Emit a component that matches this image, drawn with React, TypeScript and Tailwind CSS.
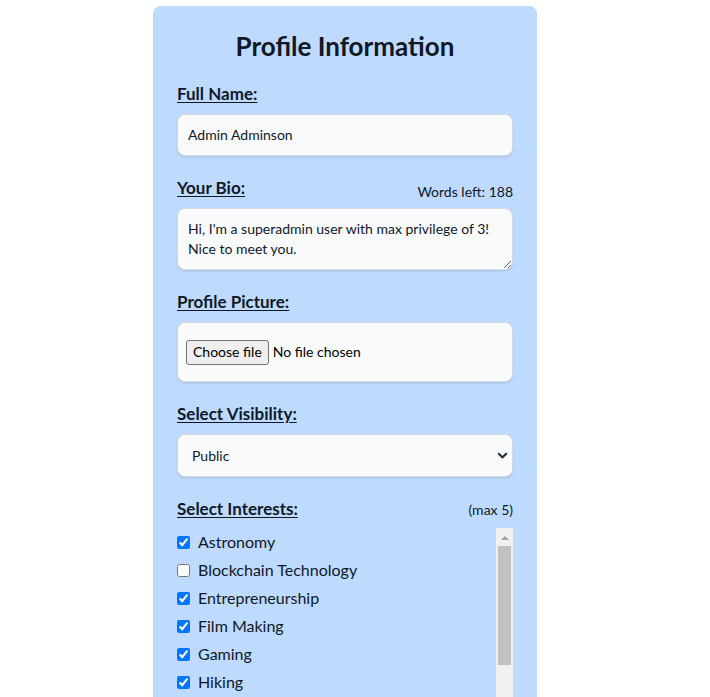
import React from "react";

const interests = [
  { id: "astronomy", label: "Astronomy", checked: true },
  { id: "blockchain", label: "Blockchain Technology", checked: false },
  { id: "entrepreneurship", label: "Entrepreneurship", checked: true },
  { id: "film", label: "Film Making", checked: true },
  { id: "gaming", label: "Gaming", checked: true },
  { id: "hiking", label: "Hiking", checked: true },
  { id: "music", label: "Music", checked: false },
  { id: "photography", label: "Photography", checked: false },
  { id: "reading", label: "Reading", checked: false },
];

const font = { fontFamily: '"Segoe UI", Lato, "Noto Sans", sans-serif' };

function Label({ children }: { children: React.ReactNode }) {
  return (
    <label className="text-[17px] leading-6 font-bold text-gray-900 underline underline-offset-2">
      {children}
    </label>
  );
}

export default function App() {
  return (
    <div className="min-h-screen bg-white" style={font}>
      <div className="flex w-[690px] justify-center pt-[6px]">
        <div className="w-96 rounded-lg bg-blue-200 p-6">
          <h2 className="mb-5 text-center text-[26px] leading-8 font-bold text-gray-900">
            Profile Information
          </h2>

          <form className="space-y-5">
            <div className="flex flex-col">
              <Label>Full Name:</Label>
              <input
                type="text"
                defaultValue="Admin Adminson"
                className="mt-2 rounded-lg border border-[#d6dbe1] bg-gray-50 p-2.5 text-sm leading-5 text-gray-900 shadow-sm outline-none"
              />
            </div>

            <div className="flex flex-col">
              <div className="flex items-end justify-between">
                <Label>Your Bio:</Label>
                <span className="translate-y-[2px] text-sm leading-5 text-gray-900">
                  Words left: 188
                </span>
              </div>
              <textarea
                rows={2}
                defaultValue="Hi, I'm a superadmin user with max privilege of 3! Nice to meet you."
                className="mt-2 rounded-lg border border-[#d6dbe1] bg-gray-50 p-2.5 text-sm leading-5 text-gray-900 shadow-sm outline-none"
              />
            </div>

            <div className="flex flex-col">
              <Label>Profile Picture:</Label>
              <div className="mt-2 flex h-[60px] items-center gap-1 rounded-lg border border-[#d6dbe1] bg-gray-50 px-2 text-sm text-gray-900 shadow-sm">
                <span className="flex h-[25px] items-center rounded-[3px] border border-[#767676] bg-[#efefef] px-[6px] text-black">
                  Choose file
                </span>
                <span className="text-black">No file chosen</span>
              </div>
            </div>

            <div className="flex flex-col">
              <Label>Select Visibility:</Label>
              <div className="relative mt-2">
                <select
                  defaultValue="public"
                  className="h-[43px] w-full appearance-none rounded-lg border border-[#d6dbe1] bg-gray-50 pl-[14px] text-sm leading-5 text-gray-900 shadow-sm outline-none"
                >
                  <option value="public">Public</option>
                  <option value="private">Private</option>
                </select>
                <svg
                  className="pointer-events-none absolute top-[18px] right-[5px]"
                  width="11"
                  height="7"
                  viewBox="0 0 11 7"
                  fill="none"
                >
                  <path d="M1.2 1.2L5.5 5.3L9.8 1.2" stroke="#1f2937" strokeWidth="2" />
                </svg>
              </div>
            </div>

            <div className="flex flex-col">
              <div className="flex items-baseline justify-between">
                <Label>Select Interests:</Label>
                <span className="text-sm leading-5 text-gray-900">(max 5)</span>
              </div>
              <div className="mt-[7px] flex h-[200px] overflow-hidden">
                <ul className="flex-1">
                  {interests.map((item) => (
                    <li key={item.id} className="flex h-7 items-center gap-2">
                      <input
                        id={item.id}
                        type="checkbox"
                        defaultChecked={item.checked}
                        className="h-[13px] w-[13px]"
                      />
                      <label htmlFor={item.id} className="text-base text-gray-900">
                        {item.label}
                      </label>
                    </li>
                  ))}
                </ul>
                <div className="flex w-[17px] flex-col items-center bg-[#f1f1f1]">
                  <svg className="mt-[7px]" width="8" height="5" viewBox="0 0 8 5">
                    <path d="M0 5L4 1L8 5Z" fill="#a3a3a3" />
                  </svg>
                  <div className="mt-[6px] h-[119px] w-[13px] bg-[#c1c1c1]" />
                </div>
              </div>
            </div>
          </form>
        </div>
      </div>
    </div>
  );
}
